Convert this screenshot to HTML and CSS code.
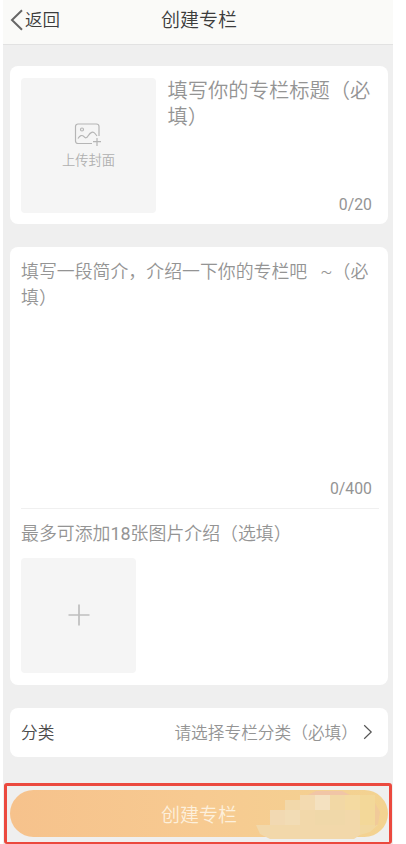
FILE: index.html
```html
<!DOCTYPE html>
<html lang="zh-CN">
<head>
<meta charset="utf-8">
<title>创建专栏</title>
<link rel="stylesheet" href="styles.css">
</head>
<body>
<main class="screen">
  <header class="nav">
    <a class="back"><svg width="14" height="22" viewBox="0 0 14 22"><path d="M12 1.2 2 11l10 9.8" fill="none" stroke="#666" stroke-width="2"/></svg><span>返回</span></a>
    <h1>创建专栏</h1>
  </header>
  <section class="card cover-card">
    <div class="cover">
      <svg width="30" height="24" viewBox="0 0 30 24" fill="none" stroke="#b5b5b5" stroke-width="1.2"><path d="M18 20.500H4A2.500 2.500 0 0 1 1.500 18V3.500A2.500 2.500 0 0 1 4 1h18.500A2.500 2.500 0 0 1 25 3.500V13"/><circle cx="8" cy="6.500" r="1.500"/><path d="M4 15.500c2-3 4-4 6-1.800 1.500 1.800 2.800 1.300 4-.7 2.500-4 5-5 7-2.500l2 2.500M23 15v8M19 18.700h8"/></svg>
      <span>上传封面</span>
    </div>
    <div class="title-field">
      <p>填写你的专栏标题（必填）</p>
      <span class="count">0/20</span>
    </div>
  </section>
  <section class="card intro-card">
    <div class="intro">
      <p>填写一段简介，介绍一下你的专栏吧&nbsp;&nbsp;&nbsp;~（必填）</p>
      <span class="count">0/400</span>
    </div>
    <p class="hint">最多可添加<span class="num">18</span>张图片介绍（选填）</p>
    <div class="add"><svg width="22" height="22" viewBox="0 0 22 22"><path d="M11 .5v21M.5 11h21" stroke="#bebebe" stroke-width="1.700"/></svg></div>
  </section>
  <section class="card category">
    <span>分类</span>
    <span class="choose">请选择专栏分类（必填）</span>
    <svg width="10" height="16" viewBox="0 0 10 16"><path d="m1.200 1.200 7 6.800-7 6.800" fill="none" stroke="#555" stroke-width="1.200"/></svg>
  </section>
  <footer class="action">
    <button class="submit">
      <span>创建专栏</span>
      <svg class="mosaic" width="128" height="50" viewBox="0 0 128 50">
        <path d="M52 5 60 1h26l8 4 4 4H52z" fill="#f1c5a6"/>
        <path d="M0 35h14V20h15V10h15V5h48v2l12-2v40l-6 4H14L4 44z" fill="#f2d8aa"/>
        <path d="M104 35h18l-8 7-10 3z" fill="#f2d8a0"/>
        <path d="M14 20h15v15H14z" fill="#f2d9b2"/>
        <path d="M29 20h15v15H29z" fill="#f2dcb5"/>
        <path d="M44 5h15v15H44z" fill="#f3dab0"/>
        <path d="M59 5h15v15H59z" fill="#f4e1c0"/>
        <path d="M74 5h15v15H74z" fill="#f2d8a5"/>
        <path d="M59 20h30v15H59z" fill="#f0d8a9"/>
        <path d="M89 5h15v15H89z" fill="#f4daa1"/>
        <path d="M104 5h15v30h-15z" fill="#f3d899"/>
        <path d="m119 13 5 9-2 12-3 2z" fill="#f1ca99"/>
      </svg>
    </button>
  </footer>
</main>
</body>
</html>
```

FILE: styles.css
```css
* { box-sizing: border-box; }
body {
  margin: 0;
  background: #fff;
  font-family: Roboto, "Noto Sans CJK SC", sans-serif;
  font-weight: 350;
  color: #949494;
}
p, h1 { margin: 0; font-weight: inherit; }
svg { display: block; flex: none; }
.screen {
  width: 390px;
  height: 844px;
  margin-left: 3px;
  background: #efefef;
  overflow: hidden;
  display: flex;
  flex-direction: column;
}
.nav {
  height: 45px;
  flex: none;
  display: grid;
  grid-template-columns: 1fr auto 1fr;
  align-items: center;
  padding: 0 7px 5px;
  background: #fafaf8;
  border-bottom: 1px solid #e2e2e2;
  color: #3c3c3c;
}
.nav h1 { font-size: 19px; line-height: 28px; padding: 3px 0 0 2px; }
.back { display: flex; align-items: center; gap: 1px; font-size: 17.5px; line-height: 26px; }
.card { flex: none; margin: 0 5px 0 7px; border-radius: 8px; background: #fff; }
.cover-card { height: 158px; margin-top: 21px; padding: 12px 11px 11px; display: flex; }
.cover {
  width: 135px;
  height: 135px;
  flex: none;
  border-radius: 4px;
  background: #f5f5f5;
  display: flex;
  flex-direction: column;
  align-items: center;
  padding-top: 45px;
  gap: 4px;
  font-size: 13.3px;
  line-height: 20px;
  color: #b0b0b0;
}
.title-field { flex: 1; margin-left: 11.5px; display: flex; flex-direction: column; justify-content: space-between; }
.title-field p { font-size: 20.3px; line-height: 26px; margin-right: -8px; }
.count { align-self: flex-end; margin: 0 5px -1px 0; font-size: 15.8px; line-height: 18px; font-weight: 400; }
.num { font-weight: 400; }
.intro-card { height: 438px; margin-top: 23px; padding: 12px 9px 12px 11px; }
.intro {
  height: 250px;
  border-bottom: 1px solid #f0f0f0;
  display: flex;
  flex-direction: column;
  justify-content: space-between;
  padding-bottom: 11px;
}
.intro p { font-size: 17.9px; line-height: 26px; }
.intro .count { margin-right: 7px; }
.hint { margin-top: 12px; font-size: 17.9px; line-height: 26px; }
.add {
  width: 115px;
  height: 115px;
  margin-top: 11px;
  padding-bottom: 1px;
  border-radius: 4px;
  background: #f5f5f5;
  display: grid;
  place-items: center;
}
.category {
  height: 49px;
  margin-top: 23px;
  padding: 0 15px 2px 11px;
  display: flex;
  align-items: center;
  font-size: 16.7px;
  color: #4c4c4c;
}
.choose { margin-left: auto; margin-right: 5px; color: #949494; }
.action {
  width: 388px;
  height: 61px;
  flex: none;
  margin: 26px 0 0 1px;
  padding: 4px 0 0 3px;
  border: 3px solid #eb493e;
  border-bottom-width: 2px;
  border-radius: 3px;
}
.submit {
  position: relative;
  display: block;
  width: 378px;
  height: 47px;
  padding: 0;
  border: 0;
  border-radius: 24px;
  background: linear-gradient(90deg, #f6c28c, #f7ca91 50%, #f3d391);
  font: inherit;
  font-size: 19px;
  color: #fdf0dc;
}
.mosaic { position: absolute; left: 246px; top: 0; }
```
